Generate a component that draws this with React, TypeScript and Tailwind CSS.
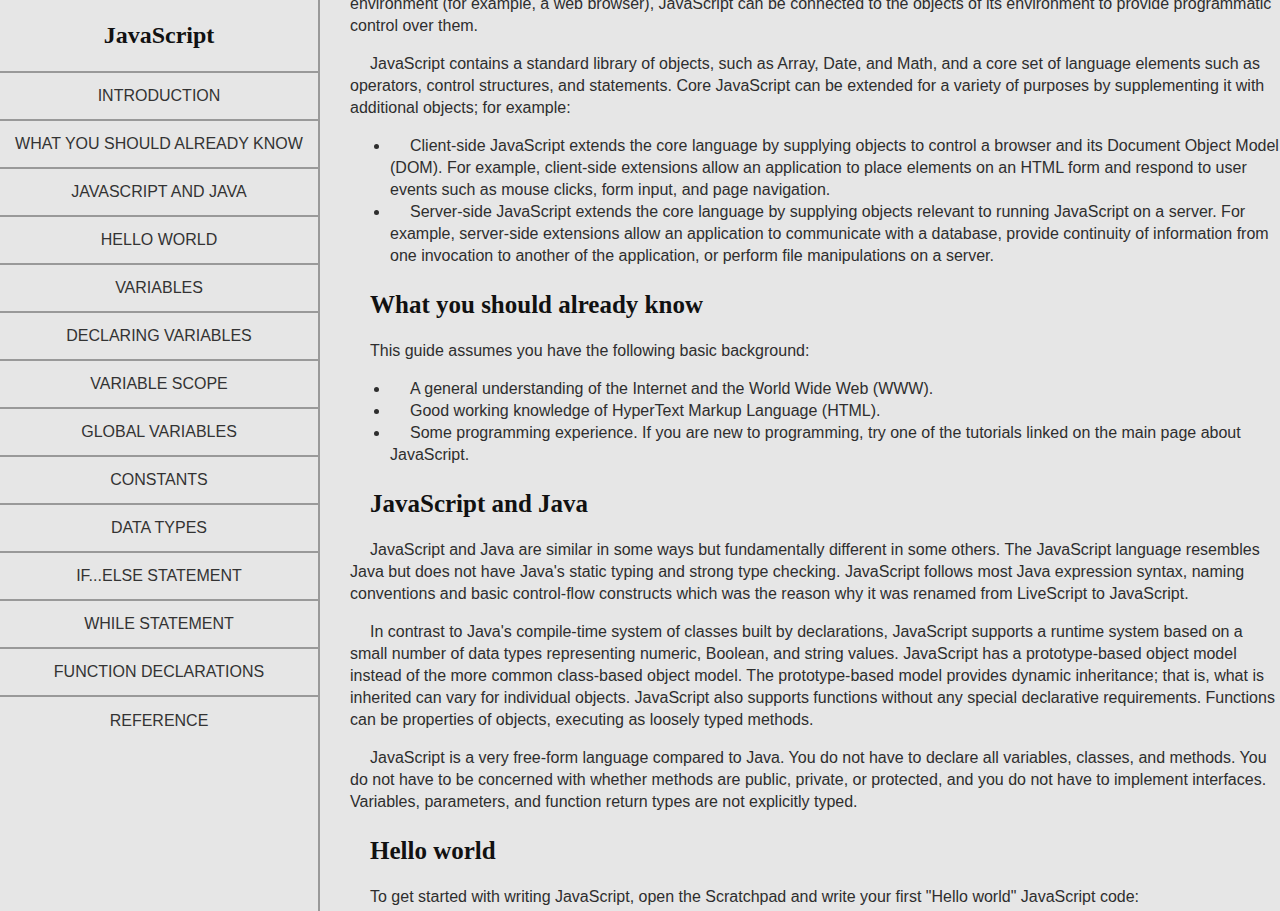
import React from 'react';

const navItems = [
  'Introduction',
  'What you should already know',
  'JavaScript and Java',
  'Hello world',
  'Variables',
  'Declaring variables',
  'Variable scope',
  'Global variables',
  'Constants',
  'Data types',
  'if...else statement',
  'while statement',
  'Function declarations',
  'Reference',
];

function Sidebar() {
  return (
    <nav className="w-[320px] h-[911px] shrink-0 border-r-2 border-[#999999] bg-[#e6e6e6]">
      <header className="h-[73px] border-b-2 border-[#999999] flex items-center justify-center">
        <h1 className="text-[24px] font-bold text-[#111111] font-['Liberation_Serif',serif] pb-[2px]">
          JavaScript
        </h1>
      </header>
      <ul>
        {navItems.map((item, i) => (
          <li
            key={item}
            className={
              'h-[48px] flex items-center justify-center uppercase text-[16px] text-[#333333] ' +
              (i < navItems.length - 1 ? 'border-b-2 border-[#999999]' : '')
            }
          >
            {item}
          </li>
        ))}
      </ul>
    </nav>
  );
}

function Heading({ children }: { children: React.ReactNode }) {
  return (
    <h2 className="mt-[22px] mb-[19px] pl-[20px] leading-[32px] text-[25px] font-bold text-[#111111] font-['Liberation_Serif',serif]">
      {children}
    </h2>
  );
}

function Para({ children, indent = true }: { children: React.ReactNode; indent?: boolean }) {
  return <p className={'my-4 ' + (indent ? 'indent-[20px]' : '')}>{children}</p>;
}

function Bullets({ items }: { items: string[] }) {
  return (
    <ul className="my-4 pl-[40px] list-disc">
      {items.map((t) => (
        <li key={t} className="indent-[20px]">
          {t}
        </li>
      ))}
    </ul>
  );
}

export default function App() {
  return (
    <div className="flex h-[911px] overflow-hidden bg-[#e6e6e6] font-['Liberation_Sans',Arial,sans-serif] text-[16px] leading-[22px] text-[#2e2e2e]">
      <Sidebar />
      <main className="flex-1 h-[911px] overflow-hidden pl-[30px]">
        <div className="-mt-[7px]">
          <p className="mb-4">
            environment (for example, a web browser), JavaScript can be connected to the objects of its environment to provide programmatic control over them.
          </p>
          <Para>
            JavaScript contains a standard library of objects, such as Array, Date, and Math, and a core set of language elements such as operators, control structures, and statements. Core JavaScript can be extended for a variety of purposes by supplementing it with additional objects; for example:
          </Para>
          <Bullets
            items={[
              'Client-side JavaScript extends the core language by supplying objects to control a browser and its Document Object Model (DOM). For example, client-side extensions allow an application to place elements on an HTML form and respond to user events such as mouse clicks, form input, and page navigation.',
              'Server-side JavaScript extends the core language by supplying objects relevant to running JavaScript on a server. For example, server-side extensions allow an application to communicate with a database, provide continuity of information from one invocation to another of the application, or perform file manipulations on a server.',
            ]}
          />
          <Heading>What you should already know</Heading>
          <Para>This guide assumes you have the following basic background:</Para>
          <Bullets
            items={[
              'A general understanding of the Internet and the World Wide Web (WWW).',
              'Good working knowledge of HyperText Markup Language (HTML).',
              'Some programming experience. If you are new to programming, try one of the tutorials linked on the main page about JavaScript.',
            ]}
          />
          <Heading>JavaScript and Java</Heading>
          <Para>
            JavaScript and Java are similar in some ways but fundamentally different in some others. The JavaScript language resembles Java but does not have Java's static typing and strong type checking. JavaScript follows most Java expression syntax, naming conventions and basic control-flow constructs which was the reason why it was renamed from LiveScript to JavaScript.
          </Para>
          <Para>
            In contrast to Java's compile-time system of classes built by declarations, JavaScript supports a runtime system based on a small number of data types representing numeric, Boolean, and string values. JavaScript has a prototype-based object model instead of the more common class-based object model. The prototype-based model provides dynamic inheritance; that is, what is inherited can vary for individual objects. JavaScript also supports functions without any special declarative requirements. Functions can be properties of objects, executing as loosely typed methods.
          </Para>
          <Para>
            JavaScript is a very free-form language compared to Java. You do not have to declare all variables, classes, and methods. You do not have to be concerned with whether methods are public, private, or protected, and you do not have to implement interfaces. Variables, parameters, and function return types are not explicitly typed.
          </Para>
          <Heading>Hello world</Heading>
          <Para>
            To get started with writing JavaScript, open the Scratchpad and write your first "Hello world" JavaScript code:
          </Para>
        </div>
      </main>
    </div>
  );
}
